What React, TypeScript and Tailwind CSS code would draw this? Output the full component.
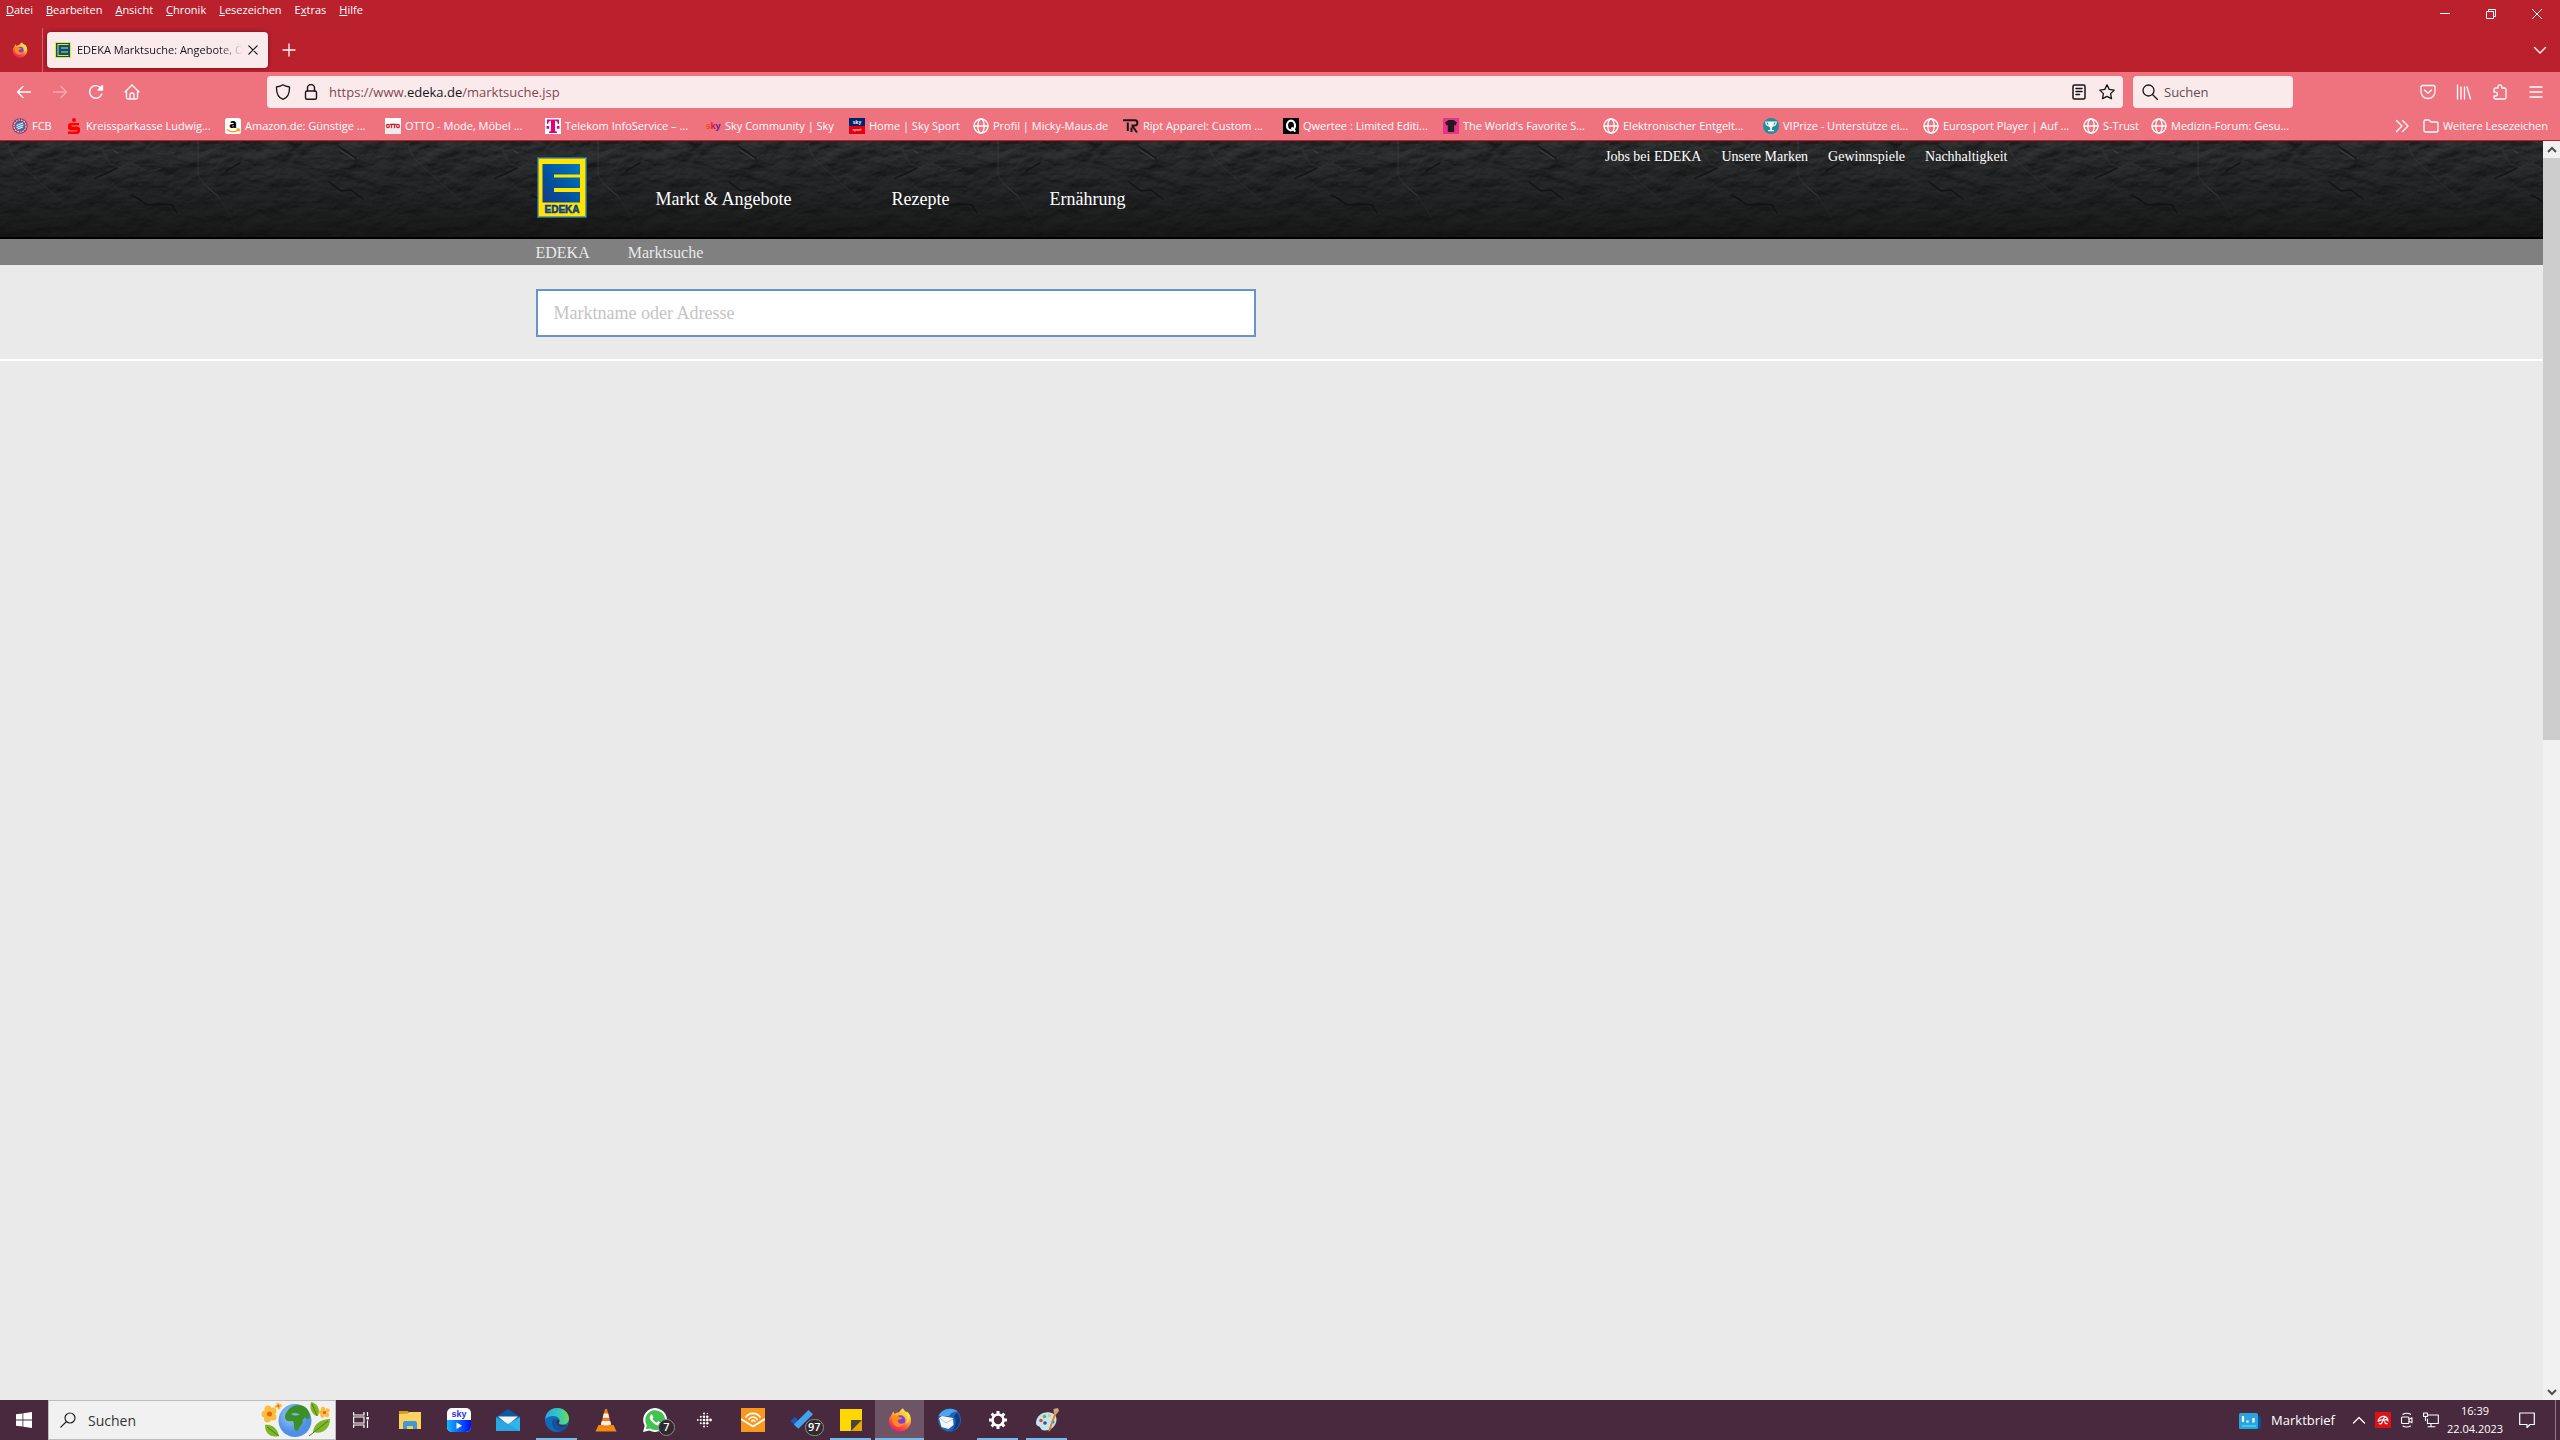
import type { ReactNode } from "react"

const Firefox = ({ className }: { className: string }) => (
    <svg viewBox="0 0 24 24" className={className}>
        <defs>
            <linearGradient id="ffx" x1="0.8" y1="0" x2="0.3" y2="1">
                <stop offset="0" stopColor="#fff44f" />
                <stop offset="0.4" stopColor="#ffb130" />
                <stop offset="0.75" stopColor="#ff4545" />
                <stop offset="1" stopColor="#f0157a" />
            </linearGradient>
        </defs>
        <path d="M3 8c.6-2 1.600-3.400 2.600-4.500.2 1 .6 1.800 1.200 2.500C8 5 9.500 4.500 11 4.600c1-2 2.400-3.400 4.200-4.300.3 2 1.500 3 3 4.300.4-.3.600-.8.600-1.300C21.800 5.500 23 9 23 12.500 23 18.500 18 23.500 12 23.500S1 18.600 1 12.500C1 10.500 1.800 9 3 8z" fill="url(#ffx)" />
        <circle cx="12.300" cy="12.300" r="5" fill="#7542e5" />
        <path d="M4 9c2.500-2 5-1.800 7-.2 1 .7 2.400.6 3.400.6-.4 1.600-2 1.900-3.600 2.300-1.200.4-1.300 1.700-.3 2.800 1.700 1.600 4 1.500 6 .3-1 3.700-5 5-8.300 3.600C5 17 3.500 13 4 9z" fill="#ff8a16" />
        <path d="M15.500 1.500c.2 2.500 1.500 4 3 6 1.200 2.500 1 5.500-.5 8.500 3.500-2.500 4.500-7 2.500-11l-1.200.8z" fill="#ffe14a" />
    </svg>
)

const EdekaIcon = () => (
    <svg viewBox="0 0 16 16" className="size-4 shrink-0">
        <path fill="#f7e600" d="M0 0h16v16H0z" />
        <path fill="#004f9f" d="M1 1h14v14H1z" />
        <path fill="#f7e600" d="M2.500 2h11v1h-11zM2.500 2h1v12h-1zM2.500 13h11v1h-11zM6 5.500h7v1H6zM6 9.500h7v1H6z" />
    </svg>
)

const Line = ({ children, className = "size-4", width = 1.3 }: { children: ReactNode; className?: string; width?: number }) => (
    <svg viewBox="0 0 16 16" className={className} fill="none" stroke="currentColor" strokeWidth={width} strokeLinecap="round" strokeLinejoin="round">
        {children}
    </svg>
)

const Globe = () => (
    <Line>
        <circle cx="8" cy="8" r="7" />
        <ellipse cx="8" cy="8" rx="3.200" ry="7" />
        <path d="M1 8h14" />
    </Line>
)

const Fav = ({ children }: { children: ReactNode }) => (
    <svg viewBox="0 0 16 16" className="size-4 overflow-visible">{children}</svg>
)

const menu = ["Datei", "Bearbeiten", "Ansicht", "Chronik", "Lesezeichen", "Extras", "Hilfe"]

const bookmarks: { text: string; width: string; icon: ReactNode }[] = [
    {
        text: "FCB", width: "w-[54px]", icon: <Fav>
            <circle cx="8" cy="8" r="7.800" fill="#2b6cae" />
            <circle cx="8" cy="8" r="7" fill="#d5203a" />
            <circle cx="8" cy="8" r="6" fill="none" stroke="#f6cfd5" strokeWidth="1.200" strokeDasharray="1.600 1" />
            <circle cx="8" cy="8" r="4.800" fill="#2f78bd" />
            <path d="M4.500 7.500l6.500-2.500M4.500 9.500l7-2.500M5.500 11l5.500-2" stroke="#fff" strokeWidth="1" />
        </Fav>
    },
    {
        text: "Kreissparkasse Ludwig...", width: "w-[159px]", icon: <Fav>
            <circle cx="8" cy="2" r="2" fill="#f00" />
            <path fill="#f00" d="M4 5h9v2.300H5.500v1.200H12l2 1.500v4l-2 2H2v-2.500h9v-1.200H4L2 11V6.500z" />
        </Fav>
    },
    {
        text: "Amazon.de: Günstige ...", width: "w-[160px]", icon: <Fav>
            <rect width="16" height="16" rx="2.500" fill="#fff" />
            <text x="8" y="10" textAnchor="middle" fontSize="12" fontWeight="800" fontFamily="Open Sans, sans-serif">a</text>
            <path d="M2 11.500c4 3 8 3 11.500.5M11.500 11l2.700.3-.6 2.200" stroke="#ff9900" strokeWidth="1.300" fill="none" />
        </Fav>
    },
    {
        text: "OTTO - Mode, Möbel ...", width: "w-[160px]", icon: <Fav>
            <path fill="#fff" d="M0 0h16v16H0z" />
            <path fill="#ececec" d="M0 10h16v6H0z" />
            <text x="8" y="10" textAnchor="middle" fontSize="5" fontWeight="700" fill="#d4021d" stroke="#d4021d" strokeWidth="0.400" fontFamily="Liberation Sans, sans-serif">OTTO</text>
        </Fav>
    },
    {
        text: "Telekom InfoService – ...", width: "w-[160px]", icon: <Fav>
            <path fill="#fff" d="M0 0h16v16H0z" />
            <path fill="#e20074" d="M2 1.500h12V6h-1.200c0-2-.8-3.200-2.800-3.300V12c0 1 .5 1.500 2 1.500V15H4v-1.500c1.500 0 2-.5 2-1.500V2.700C4 2.800 3.200 4 3.200 6H2zM1.500 8h2.700v2.700H1.500zM11.800 8h2.700v2.700h-2.700z" />
        </Fav>
    },
    {
        text: "Sky Community | Sky", width: "w-[144px]", icon: <Fav>
            <defs>
                <linearGradient id="skyc"><stop offset="0" stopColor="#ff6a00" /><stop offset="0.5" stopColor="#c8104c" /><stop offset="1" stopColor="#3a1bbd" /></linearGradient>
            </defs>
            <text x="8" y="10.500" textAnchor="middle" fontSize="9" fontWeight="700" fill="url(#skyc)" fontFamily="Liberation Sans, sans-serif">sky</text>
        </Fav>
    },
    {
        text: "Home | Sky Sport", width: "w-[124px]", icon: <Fav>
            <path fill="#00246d" d="M0 0h16v8H0z" />
            <path fill="#e3000f" d="M0 8h16v8H0z" />
            <text x="8" y="5.500" textAnchor="middle" fontSize="5" fontWeight="700" fill="#fff" fontFamily="Liberation Sans, sans-serif">sky</text>
            <text x="8" y="13" textAnchor="middle" fontSize="4" fill="#fff" fontFamily="Liberation Sans, sans-serif">sport</text>
        </Fav>
    },
    { text: "Profil | Micky-Maus.de", width: "w-[150px]", icon: <Globe /> },
    {
        text: "Ript Apparel: Custom ...", width: "w-[160px]", icon: <Fav>
            <path fill="none" stroke="#161616" strokeWidth="2" d="M0 2.200h12c3.200 0 3.200 5.300 0 5.300H8.500M4.800 4.500V13M9 7.500l5 7M8.500 9.500V14" />
        </Fav>
    },
    {
        text: "Qwertee : Limited Editi...", width: "w-[160px]", icon: <Fav>
            <path d="M0 0h16v16H0z" />
            <ellipse cx="8" cy="7.500" rx="4" ry="4.800" fill="none" stroke="#fff" strokeWidth="2.200" />
            <path d="M8.500 9.500l3.800 4.200" stroke="#fff" strokeWidth="2" />
        </Fav>
    },
    {
        text: "The World's Favorite S...", width: "w-[160px]", icon: <Fav>
            <path fill="#e6338b" d="M0 0h16v16H0z" />
            <path fill="#221a1e" d="M5.500 2h5L14 4.500l-1.500 3-1.300-.6V14H4.800V6.900l-1.300.6L2 4.500z" />
        </Fav>
    },
    { text: "Elektronischer Entgelt...", width: "w-[160px]", icon: <Globe /> },
    {
        text: "VIPrize - Unterstütze ei...", width: "w-[160px]", icon: <Fav>
            <circle cx="8" cy="8" r="8" fill="#1f8f9b" />
            <path fill="#fff" d="M5 3.500h6c0 4-1 5.500-2.200 6.300V12H11v1.300H5V12h2.200V9.800C6 9 5 7.500 5 3.500z" />
            <path fill="none" stroke="#fff" strokeWidth="1.100" d="M5 4H2.800c0 2.500 1 3.500 3 4M11 4h2.200c0 2.500-1 3.500-3 4" />
        </Fav>
    },
    { text: "Eurosport Player | Auf ...", width: "w-[160px]", icon: <Globe /> },
    { text: "S-Trust", width: "w-[68px]", icon: <Globe /> },
    { text: "Medizin-Forum: Gesu...", width: "w-[160px]", icon: <Globe /> },
]

const TitleArea = () => (
    <header className="flex h-[72px] justify-between bg-[#bb202d] text-white">
        <div className="flex flex-col">
            <nav className="flex h-5 items-center gap-[13px] pl-[6px] text-[11px]">
                {menu.map((item) => (
                    <button key={item} className="leading-5">
                        {item === "Extras" ? <>E<u>x</u>tras</> : <><u>{item[0]}</u>{item.slice(1)}</>}
                    </button>
                ))}
            </nav>
            <div className="mt-2 flex h-11 items-center">
                <button aria-label="Firefox View" className="flex h-11 w-[43px] items-center border-r border-white/30 pl-3">
                    <Firefox className="size-4" />
                </button>
                <div className="ml-1 flex h-9 w-[221px] items-center rounded bg-[#faeaeb] pl-2 text-[11px] text-[#15141a] shadow-[0_0_4px_rgba(0,0,0,0.4)]">
                    <EdekaIcon />
                    <span className="ml-[6px] w-[166px] overflow-hidden whitespace-nowrap bg-linear-to-r from-[#15141a] from-85% to-transparent bg-clip-text text-transparent">
                        EDEKA Marktsuche: Angebote, Ö
                    </span>
                    <button aria-label="Tab schließen" className="ml-1">
                        <Line className="size-3" width={1.6}><path d="M2.500 2.500l11 11M13.500 2.500l-11 11" /></Line>
                    </button>
                </div>
                <button aria-label="Neuer Tab" className="ml-[13px]">
                    <Line><path d="M8 2v12M2 8h12" /></Line>
                </button>
            </div>
        </div>
        <div className="flex flex-col items-end">
            <div className="flex h-7 items-center">
                <button aria-label="Minimieren" className="flex w-[46px] justify-center">
                    <svg viewBox="0 0 10 10" className="size-[10px]" stroke="currentColor"><path d="M0 4.500h10" /></svg>
                </button>
                <button aria-label="Verkleinern" className="flex w-[46px] justify-center">
                    <svg viewBox="0 0 10 10" className="size-[10px]" fill="none" stroke="currentColor"><path d="M.5 2.500h7v7h-7zM2.500 2.500v-2h7v7h-2" /></svg>
                </button>
                <button aria-label="Schließen" className="flex w-[46px] justify-center">
                    <svg viewBox="0 0 10 10" className="size-[10px]" stroke="currentColor"><path d="M0 0l10 10M10 0L0 10" /></svg>
                </button>
            </div>
            <button aria-label="Alle Tabs auflisten" className="mt-[14px] mr-3">
                <Line><path d="M2.500 5.500L8 11l5.500-5.500" /></Line>
            </button>
        </div>
    </header>
)

const Toolbar = () => (
    <div className="flex h-10 items-center bg-[#ef737f] pr-4 pl-4 text-white">
        <div className="flex w-[251px] items-center gap-5">
            <button aria-label="Zurück"><Line><path d="M14.500 8H1.500M7 2.500L1.500 8 7 13.500" /></Line></button>
            <button aria-label="Vor" className="opacity-40"><Line><path d="M1.500 8h13M9 2.500L14.500 8 9 13.500" /></Line></button>
            <button aria-label="Neu laden">
                <Line><path d="M13.800 10a6.300 6.300 0 1 1-1-6L14.500 5.500" /><path d="M14.500 1.500v4.500H10z" fill="currentColor" /></Line>
            </button>
            <button aria-label="Startseite">
                <Line><path d="M1 8l7-7 7 7M2.500 7v6.500a1.500 1.500 0 0 0 1.500 1.500h8a1.500 1.500 0 0 0 1.500-1.500V7M6 15v-4a2 2 0 0 1 4 0v4" /></Line>
            </button>
        </div>
        <div className="flex h-8 flex-1 items-center rounded bg-[#faeaeb] px-2 text-[#15141a]">
            <Line><path d="M8 .8c2 1.500 4.500 2 6.500 2.200C14.700 9 13 13.500 8 15.300 3 13.500 1.300 9 1.500 3 3.500 2.800 6 2.300 8 .8z" /></Line>
            <Line className="ml-3 size-4" width={1.4}><rect x="2.500" y="7" width="11" height="8.300" rx="1.500" /><path d="M4.500 7V4a3.500 3.500 0 0 1 7 0v3" /></Line>
            <a href="#" className="ml-[10px] flex-1 pt-0.5 text-[13px] text-[#83474f]">
                https://www.<span className="text-[#15141a]">edeka.de</span>/marktsuche.jsp
            </a>
            <button aria-label="Leseansicht" className="mr-3">
                <Line width={1.5}><rect x="2" y="1" width="12" height="14" rx="1.500" /><path d="M5 4.500h6M5 7.500h6M5 10.500h3.500" /></Line>
            </button>
            <button aria-label="Lesezeichen hinzufügen">
                <Line><path d="M8 .8l2.200 4.600 5 .7-3.600 3.500.9 5L8 12.300l-4.500 2.300.9-5L.8 6.100l5-.7z" /></Line>
            </button>
        </div>
        <label className="ml-[10px] flex h-8 w-40 items-center rounded bg-[#faeaeb] pl-[9px] text-[#15141a]">
            <Line><circle cx="6.500" cy="6.500" r="5.500" /><path d="M10.500 10.500l5 5" /></Line>
            <input placeholder="Suchen" className="ml-[6px] w-24 bg-transparent pt-0.5 text-[13px] outline-none placeholder:text-[#5f4e53]" />
        </label>
        <div className="ml-[127px] flex gap-5">
            <button aria-label="Pocket"><Line><path d="M2.500 1.500h11A1.500 1.500 0 0 1 15 3v4.500a7 7 0 0 1-14 0V3a1.500 1.500 0 0 1 1.500-1.500zM4.500 6L8 9.300 11.500 6" /></Line></button>
            <button aria-label="Bibliothek"><Line><path d="M1.500 1v14M5 3v12M8.500 3v12M11 3l3.500 12" /></Line></button>
            <button aria-label="Erweiterungen"><Line><path d="M2 6.500V5.500A1.500 1.500 0 0 1 3.500 4H6V2.800a1.900 1.900 0 0 1 3.800 0V4h2.700A1.500 1.500 0 0 1 14 5.500V13.500a1.500 1.500 0 0 1-1.500 1.500h-9A1.500 1.500 0 0 1 2 13.500V12h1.500a1.900 1.900 0 0 0 0-3.800H2z" /></Line></button>
            <button aria-label="Menü"><Line><path d="M2 3h12M2 8h12M2 13h12" /></Line></button>
        </div>
    </div>
)

const BookmarkBar = () => (
    <div className="flex h-[29px] items-center border-b border-[#bb202d] bg-[#ef737f] pr-3 pl-3 text-[11px] text-white">
        {bookmarks.map((b) => (
            <a key={b.text} href="#" className={`${b.width} flex shrink-0 items-center gap-1 whitespace-nowrap`}>
                {b.icon}
                <span className="pt-px">{b.text}</span>
            </a>
        ))}
        <div className="ml-auto flex items-center whitespace-nowrap">
            <button aria-label="Weitere Lesezeichen anzeigen" className="mr-[13px]">
                <Line><path d="M2.500 2.500L8 8l-5.500 5.500M8.500 2.500L14 8l-5.500 5.500" /></Line>
            </button>
            <a href="#" className="flex items-center gap-1">
                <Line><path d="M1 3.500A1.500 1.500 0 0 1 2.500 2H6l2 2h5.500A1.500 1.500 0 0 1 15 5.500v7a1.500 1.500 0 0 1-1.500 1.500h-11A1.500 1.500 0 0 1 1 12.500z" /></Line>
                <span className="pt-px">Weitere Lesezeichen</span>
            </a>
        </div>
    </div>
)

// slate background, one 400px tile repeated over the full width
const Slate = () => (
    <svg className="absolute inset-0 size-full" aria-hidden="true">
        <defs>
            <filter id="rough" filterUnits="userSpaceOnUse" x="0" y="0" width="400" height="96" colorInterpolationFilters="sRGB">
                <feTurbulence type="fractalNoise" baseFrequency="0.035 0.060" numOctaves="6" seed="4" stitchTiles="stitch" result="n" />
                <feDiffuseLighting in="n" surfaceScale="3" diffuseConstant="0.330" lightingColor="#c4c7ca">
                    <feDistantLight azimuth="250" elevation="44" />
                </feDiffuseLighting>
            </filter>
            <linearGradient id="fade" x1="0" y1="0" x2="0" y2="1">
                <stop offset="0" stopColor="#1a1b1c" stopOpacity="0.250" />
                <stop offset="0.600" stopColor="#161718" stopOpacity="0.600" />
                <stop offset="1" stopColor="#121212" stopOpacity="0.850" />
            </linearGradient>
            <pattern id="slate" width="400" height="96" patternUnits="userSpaceOnUse">
                <rect width="400" height="96" fill="#2b2c2e" />
                <rect width="400" height="96" filter="url(#rough)" />
                <g fill="none" strokeLinecap="round">
                    <path d="M131 54l8 4 8 6 14-1 11 1 5 8M329 41l12 9 10-1 12 9" stroke="#08080a" strokeWidth="1.400" />
                    <path d="M198 0v34l6 9 14 12 9 14 8 16" stroke="#55565a" strokeWidth="1" opacity="0.600" />
                    <path d="M8 4l5 12 10 10 18 16 20 18M102 8l7 14 12 5 7-5M133 23l16 8 12-4M112 42l9 10" stroke="#55565a" strokeWidth="0.800" opacity="0.600" />
                    <path d="M95 37l10-4 12-6M226 30l14-8M338 5l18 12" stroke="#101012" strokeWidth="1.500" />
                    <path d="M340 9l14 9M208 47l10 8M113 9l5 3" stroke="#77797c" strokeWidth="0.900" opacity="0.700" />
                </g>
            </pattern>
        </defs>
        <rect width="100%" height="100%" fill="url(#slate)" />
        <rect width="100%" height="100%" fill="url(#fade)" />
    </svg>
)

const EdekaLogo = () => (
    <svg viewBox="0 0 50 61" className="h-[61px] w-[50px]">
        <defs>
            <linearGradient id="blue" x1="1" y1="0" x2="0" y2="1">
                <stop offset="0" stopColor="#0079c1" />
                <stop offset="0.600" stopColor="#00509d" />
                <stop offset="1" stopColor="#1c3a86" />
            </linearGradient>
        </defs>
        <path fill="#1d64a5" d="M0 0h50v61H0z" />
        <path fill="#8fa34c" d="M1 1h48v59H1z" />
        <path fill="#ffe500" d="M2 2h46v57H2z" />
        <path fill="url(#blue)" d="M5.500 7h37.500v10.500H17v3h26V31H17v4h26v10.500H5.500z" />
        <text x="25" y="55.500" textAnchor="middle" fontSize="10" fontWeight="700" fill="#0b3f8c" stroke="#0b3f8c" strokeWidth="0.600" fontFamily="Liberation Sans, sans-serif">EDEKA</text>
    </svg>
)

const ScrollBar = () => (
    <div className="flex w-[17px] flex-col bg-[#f0f0f0] text-[#505050]">
        <button aria-label="Nach oben" className="flex h-[17px] items-center justify-center">
            <svg viewBox="0 0 10 10" className="size-[10px]" fill="none" stroke="currentColor" strokeWidth="2"><path d="M1 7l4-4 4 4" /></svg>
        </button>
        <div className="flex-[19] bg-[#cdcdcd]" />
        <div className="flex-[21]" />
        <button aria-label="Nach unten" className="flex h-[17px] items-center justify-center">
            <svg viewBox="0 0 10 10" className="size-[10px]" fill="none" stroke="currentColor" strokeWidth="2"><path d="M1 3l4 4 4-4" /></svg>
        </button>
    </div>
)

const Page = () => (
    <div className="flex min-h-0 flex-1">
        <main className="flex-1 bg-[#eaeaea] font-['Liberation_Serif',serif]">
            <div className="relative h-[98px] border-b-2 border-black">
                <Slate />
                <div className="relative mx-auto flex h-full max-w-368 text-white">
                    <a href="#" aria-label="EDEKA" className="mt-4 ml-px h-[61px]"><EdekaLogo /></a>
                    <nav className="mt-[46px] ml-[69px] flex gap-[100px] text-lg leading-6">
                        <a href="#">Markt &amp; Angebote</a>
                        <a href="#">Rezepte</a>
                        <a href="#">Ernährung</a>
                    </nav>
                    <nav className="mt-[6px] ml-auto flex gap-5 text-sm">
                        <a href="#">Jobs bei EDEKA</a>
                        <a href="#">Unsere Marken</a>
                        <a href="#">Gewinnspiele</a>
                        <a href="#">Nachhaltigkeit</a>
                    </nav>
                </div>
            </div>
            <div className="h-[26px] bg-[#808080]">
                <nav className="mx-auto flex max-w-368 gap-[38px] text-base leading-[28px] text-[#eaeaea]">
                    <a href="#">EDEKA</a>
                    <a href="#">Marktsuche</a>
                </nav>
            </div>
            <div className="border-b-2 border-white pt-6 pb-[22px]">
                <form className="mx-auto max-w-368">
                    <input aria-label="Marktname oder Adresse" placeholder="Marktname oder Adresse" className="block h-12 w-[720px] border-2 border-[#6794c9] bg-white px-4 text-lg outline-none placeholder:text-[#c4c4c4]" />
                </form>
            </div>
        </main>
        <ScrollBar />
    </div>
)

const AppIcon = ({ children }: { children: ReactNode }) => (
    <svg viewBox="0 0 24 24" className="size-6">{children}</svg>
)

const Badge = ({ children }: { children: ReactNode }) => (
    <span className="absolute top-[19px] left-[28px] flex h-[17px] min-w-[17px] items-center justify-center rounded-full border border-[#8b8b8b] bg-[#2f2a2e] px-0.5 text-[11px] font-semibold text-white">
        {children}
    </span>
)

const apps: { name: string; icon: ReactNode; open?: boolean; active?: boolean; badge?: string }[] = [
    {
        name: "Aktive Anwendungen", icon: <svg viewBox="0 0 16 16" className="size-4" fill="none" stroke="#fff" strokeWidth="1.200">
            <path d="M.6 0v3h10.400V0M.6 16v-3h10.400v3M.6 5h10.400v6H.6zM14.500 0v4M14.500 8.500V16" /><path fill="#fff" d="M14 5.500h1.500v1.500H14z" />
        </svg>
    },
    {
        name: "Explorer", icon: <AppIcon>
            <path fill="#d99a10" d="M1 3h9l1.500 2.500H1z" /><path fill="#fbd25d" d="M1 5.500l9-.2L11.500 4H23v17H1z" />
            <path fill="#3f98d8" d="M5 21v-6.500L6.500 13h11l1.500 1.500V21h-4v-3H9v3z" /><path fill="#f6c844" d="M9 18h6v2H9z" />
        </AppIcon>
    },
    {
        name: "Sky", icon: <AppIcon>
            <defs><linearGradient id="skyb"><stop offset="0" stopColor="#12b7ff" /><stop offset="1" stopColor="#0010f5" /></linearGradient></defs>
            <rect width="24" height="24" rx="5" fill="#fff" /><path d="M0 12h24v7a5 5 0 0 1-5 5H5a5 5 0 0 1-5-5z" fill="url(#skyb)" />
            <text x="12" y="9" textAnchor="middle" fontSize="9" fontWeight="700" fill="#2b2bf0" fontFamily="Liberation Sans, sans-serif">sky</text>
            <path d="M9.500 14.500l5.500 3.300-5.500 3.200z" fill="#fff" />
        </AppIcon>
    },
    {
        name: "Mail", icon: <AppIcon>
            <path fill="#0c59a4" d="M0 9l12-8 12 8v3H0z" /><path fill="#f4f4f4" d="M2 8.500h20L12 17z" />
            <path fill="#2fb4ec" d="M0 9l12 7 12-7v14H0z" /><path fill="#1c8fd8" d="M24 23L10 14.800 0 9v14z" opacity="0.350" />
        </AppIcon>
    },
    {
        name: "Edge", open: true, icon: <AppIcon>
            <defs><linearGradient id="edg" x1="0" x2="1"><stop offset="0" stopColor="#2ca9df" /><stop offset="0.550" stopColor="#35c6c0" /><stop offset="1" stopColor="#68dd54" /></linearGradient></defs>
            <circle cx="12" cy="12" r="12" fill="#1269b8" />
            <path fill="url(#edg)" d="M.2 11C.8 4.500 6 0 12 0c7 0 12 5 12 10.500 0 4-3 6-6 6-3.500 0-5-1.200-4.200-2.300.8-1 1-1.900.5-3C12.500 7.500 5 6.500.2 11z" />
            <path fill="#48293d" d="M12.500 11.500c-2.500 3 0 7.500 5 7.500 2 0 4-1 5.200-2-1.200 0-8.200 1.500-9-1.200-.2-.8.500-1.300.8-2.300.2-1-.8-2-2-2z" />
            <path fill="#104a94" d="M7 14c0 5 4 9.500 8.500 9.500 3-1 5-3 6.500-5-7 2.800-12-2-10-7-3-.5-5 .5-5 2.500z" opacity="0.700" />
        </AppIcon>
    },
    {
        name: "VLC", icon: <AppIcon>
            <path fill="#f28a11" d="M4.500 17h15l3 6.500h-21z" /><path fill="#f47d0b" d="M11 1h2l4.500 17.500c-2 1.500-9 1.500-11 0z" />
            <path fill="#eee" d="M9.800 5.500h4.400l1.100 4.200H8.700zM7.800 13h8.400l1 3.500c-3 1.200-7.500 1.200-10.400 0z" />
        </AppIcon>
    },
    {
        name: "WhatsApp", badge: "7", icon: <AppIcon>
            <path fill="#fff" d="M0 24l1.700-6.200A11.900 11.900 0 1 1 6.300 22.400z" />
            <path fill="#3fc351" d="M2.700 21.300l1.100-4A9.900 9.900 0 1 1 7 20.500z" />
            <path fill="#fff" d="M8.500 6.500c-3 1.500-2 5 1.300 8 3.200 3 6.500 4 8 1.700.7-1.600.2-1.700-2.400-2.900-.8-.3-1 1.500-1.900 1.300-1.700-.7-3.300-2.200-4-3.800-.1-.7 1.200-1 .8-1.900-.8-1.900-.9-2.300-1.800-2.400z" />
        </AppIcon>
    },
    {
        name: "Fitbit", icon: <AppIcon>
            <g fill="#fff">
                <circle cx="12" cy="5.500" r="1" /><circle cx="12" cy="8.700" r="1.200" /><circle cx="12" cy="12" r="1.300" /><circle cx="12" cy="15.300" r="1.200" /><circle cx="12" cy="18.500" r="1" />
                <circle cx="8.800" cy="8.700" r="1" /><circle cx="8.800" cy="12" r="1.100" /><circle cx="8.800" cy="15.300" r="1" />
                <circle cx="15.300" cy="5.500" r=".7" /><circle cx="15.300" cy="8.700" r="1.300" /><circle cx="15.300" cy="12" r="1.400" /><circle cx="15.300" cy="15.300" r="1.300" /><circle cx="15.300" cy="18.500" r=".7" />
                <circle cx="18.500" cy="12" r="1.400" /><circle cx="5.800" cy="12" r=".9" />
            </g>
        </AppIcon>
    },
    {
        name: "Audible", icon: <AppIcon>
            <path fill="#f8991d" d="M0 0h24v24H0z" />
            <path fill="none" stroke="#fff" strokeWidth="1.700" d="M0 11l12 7.500L24 11M4.500 9.500c4-5.500 11-5.500 15 0M7.500 11.500c3-3.500 6.500-3.200 9 .2M10.300 13.500c1.600-1.600 2.800-1.200 4 .3" />
        </AppIcon>
    },
    {
        name: "To Do", badge: "97", icon: <AppIcon>
            <path fill="#185abd" d="M4.700 8.800l7.500 7.500L8 20.500.5 13z" /><path fill="#41a5ee" d="M18.500 2l4.500 4.300L8.300 20.700 3.900 16.500z" />
        </AppIcon>
    },
    {
        name: "Kurznotizen", open: true, icon: <AppIcon>
            <path fill="#ffd800" d="M1 1h22v22H1z" /><path fill="#e9a800" d="M12 23l11-11v11z" /><path fill="#4a4436" d="M12 12h11L12 23z" />
        </AppIcon>
    },
    { name: "Firefox", open: true, active: true, icon: <Firefox className="size-6" /> },
    {
        name: "Thunderbird", icon: <AppIcon>
            <circle cx="12.500" cy="12" r="11.500" fill="#1f63b5" /><path fill="#4aa6ee" d="M1.500 8c3-7 13-10 19.500-4.500-4-.5-7 1-9 4.500z" />
            <path fill="#113a80" d="M20 5c5 5 4 14-5 18 4-5 5-11 2-15z" />
            <path fill="#f6f6f8" d="M2 10l3-2 11 2 .5 7-5 4-7-2z" /><path fill="none" stroke="#b8c4d4" d="M3 10l6 5 7-4" />
        </AppIcon>
    },
    {
        name: "Einstellungen", open: true, icon: <AppIcon>
            <circle cx="12" cy="12" r="5.500" fill="none" stroke="#fff" strokeWidth="2.600" />
            <path stroke="#fff" strokeWidth="3" d="M12 3v3M12 18v3M3 12h3M18 12h3M5.600 5.600l2.200 2.200M16.200 16.200l2.200 2.200M18.400 5.600l-2.200 2.200M7.800 16.200l-2.200 2.200" />
        </AppIcon>
    },
    {
        name: "Paint", open: true, icon: <AppIcon>
            <path fill="#c3e4f2" d="M11 4.500c7-1 11 3 10.500 8-.6 5-5 10-11.500 10-5 0-4-3.500-6-4C1 17.500.5 15.500 1.500 12 2.800 8 6 5 11 4.500z" />
            <circle cx="6" cy="12.500" r="1.800" fill="#e8442f" /><circle cx="9.500" cy="8.500" r="1.700" fill="#58b947" /><circle cx="14.500" cy="7.500" r="1.500" fill="#f2c22d" /><circle cx="10" cy="15" r="1.800" fill="#3c5275" /><circle cx="18" cy="14" r="1.600" fill="#2d83d3" />
            <path fill="#e08427" d="M19.500 5l1.800.7-6 17-2 .8.400-2.300z" /><path fill="#cfa47b" d="M18.500 1l4.500-1 1 3-3 3.500-2.200-1z" />
        </AppIcon>
    },
]

const Earth = () => (
    <svg viewBox="0 0 70 36" className="ml-auto h-9 w-[70px]">
        <defs><radialGradient id="sea" cx="0.4" cy="0.35"><stop offset="0" stopColor="#a3ccfb" /><stop offset="1" stopColor="#4f8fe4" /></radialGradient></defs>
        <circle cx="34" cy="18.500" r="16.500" fill="url(#sea)" />
        <path fill="#3c8f24" d="M27 8c4-5 12-6 17-3 4 3 5 7 4.500 11-2 2-3.500 1-4-1l-3 3c1 3-1 5-3 7-1 4-4 5-5 2-1-4 0-6-2-8-5 1-8-1-7.500-5 .5-3 2-4 3-6z" />
        <path fill="#7cb4f3" d="M30 12c3-1.500 6-1 9 .5-3 1.500-6 1.500-9-.5z" />
        <g fill="#fbbd3c">
            <circle cx="4" cy="12" r="3.500" /><circle cx="7" cy="7" r="3.500" /><circle cx="12" cy="9" r="3.500" /><circle cx="12" cy="15" r="3.500" /><circle cx="6.500" cy="17" r="3.500" />
            <circle cx="17" cy="2" r="1.500" /><circle cx="15" cy="4.500" r="1.500" /><circle cx="18" cy="6" r="1.500" /><circle cx="19.500" cy="3.500" r="1.500" />
            <circle cx="62" cy="7" r="2.200" /><circle cx="66.500" cy="8.500" r="2.200" /><circle cx="66" cy="13" r="2.200" /><circle cx="61.500" cy="13.500" r="2.200" /><circle cx="60" cy="10" r="2.200" />
        </g>
        <circle cx="8.500" cy="12" r="2.500" fill="#e8641b" /><circle cx="17.300" cy="4" r="1.300" fill="#e8641b" /><circle cx="63.500" cy="10.500" r="1.700" fill="#e8641b" />
        <path fill="#7db728" d="M4 23c6-1 12 2 14 11C10 36 4 32 4 23zM69 17c-9 0-16 5-17 13 9 3 17-3 17-13zM50 0c6 1 10 7 7 14-6-1-9-7-7-14z" />
        <path fill="none" stroke="#4a7d12" d="M6 25l12 9M67 19L48 34M51 2l5 12" />
    </svg>
)

const Taskbar = () => (
    <footer className="flex h-10 shrink-0 items-center bg-[#48293d] text-white">
        <button aria-label="Start" className="flex h-10 w-12 items-center justify-center">
            <svg viewBox="0 0 16 16" className="size-4" fill="#fff"><path d="M0 2.300L6.500 1.400v6.200H0zM7.300 1.300L16 0v7.600H7.300zM0 8.400h6.500v6.200L0 13.700zM7.300 8.400H16V16l-8.700-1.300z" /></svg>
        </button>
        <label className="flex h-10 w-72 items-center border border-[#bcbcbc] bg-[#f1f1f1] pr-1 pl-[11px] text-[#222]">
            <Line width={1.2}><circle cx="10" cy="6" r="5" /><path d="M6.500 9.500L.8 15.200" /></Line>
            <input placeholder="Suchen" className="ml-3 w-28 bg-transparent pt-0.5 text-sm outline-none placeholder:text-[#333]" />
            <Earth />
        </label>
        <div className="flex">
            {apps.map((app) => (
                <button key={app.name} aria-label={app.name} className={`relative flex h-10 w-[49px] items-center justify-center ${app.active ? "bg-[#6e5565]" : ""}`}>
                    {app.icon}
                    {app.badge && <Badge>{app.badge}</Badge>}
                    {app.open && <span className={`absolute bottom-0 h-0.5 bg-[#76b9ed] ${app.active ? "inset-x-0" : "inset-x-1"}`} />}
                </button>
            ))}
        </div>
        <div className="ml-auto flex h-10 items-center">
            <button className="flex items-center gap-[10px] pt-px text-[13px]">
                <svg viewBox="0 0 22 16" className="h-4 w-[22px]">
                    <rect x="4" y="3" width="18" height="13" rx="1.500" fill="#0d4f8f" /><rect width="19" height="16" rx="1.500" fill="#2ba3dc" />
                    <path stroke="#fff" strokeWidth="2.200" d="M4 3v6M8.500 7.500v2M14.500 5v4.500" /><path stroke="#35e0f0" d="M3 13h14" strokeWidth="1.500" />
                </svg>
                Marktbrief
            </button>
            <button aria-label="Ausgeblendete Symbole" className="ml-4">
                <Line><path d="M2.500 11L8 5.500l5.500 5.500" /></Line>
            </button>
            <button aria-label="Avira" className="ml-2">
                <svg viewBox="0 0 16 16" className="size-4"><path fill="#e01019" d="M0 0h16v16H0z" /><path fill="none" stroke="#fff" strokeWidth="1.300" d="M3 9.500C3.500 6 6.500 3.800 9.500 4.500c2 .5 3.300 2 3.300 4-1.300-1.200-2.600-1-3.600 0C7.500 7.500 5 7.800 3 9.500M9.500 5L7 10.500c-.8 1.800-2.500 1.500-3 .8M10 9.500c-.5 1.500.8 2.500 2.500 2" /></svg>
            </button>
            <button aria-label="Besprechung starten" className="ml-2">
                <Line width={1.1}><rect x="2.500" y="5" width="7.500" height="6.500" rx="1" /><path d="M10 7.300l3-1.500v5l-3-1.500M4 2.300c2-1.500 5.500-1.500 7.500 0M4 14c2 1.400 5.500 1.400 7.500 0" /></Line>
            </button>
            <button aria-label="Netzwerk" className="ml-2">
                <Line width={1.1}><path d="M5 3h10.300v8.500H4.500V7M8 11.500v3M5 14.700h7M.6 1h3.800v3.500H.6zM2.500 4.500v4" /></Line>
            </button>
            <button className="ml-2 w-14 text-center text-[11px] leading-[18px]">16:39<br />22.04.2023</button>
            <button aria-label="Benachrichtigungen" className="ml-4">
                <Line width={1.2}><path d="M.7 1h14.600v11.500H11L8 15.500v-3H.7z" /></Line>
            </button>
            <div className="mr-1 ml-5 h-10 border-r border-[#8d7c87]" />
        </div>
    </footer>
)

export default function App() {
    return (
        <div className="flex h-screen flex-col font-['Open_Sans',sans-serif]">
            <TitleArea />
            <Toolbar />
            <BookmarkBar />
            <Page />
            <Taskbar />
        </div>
    )
}
